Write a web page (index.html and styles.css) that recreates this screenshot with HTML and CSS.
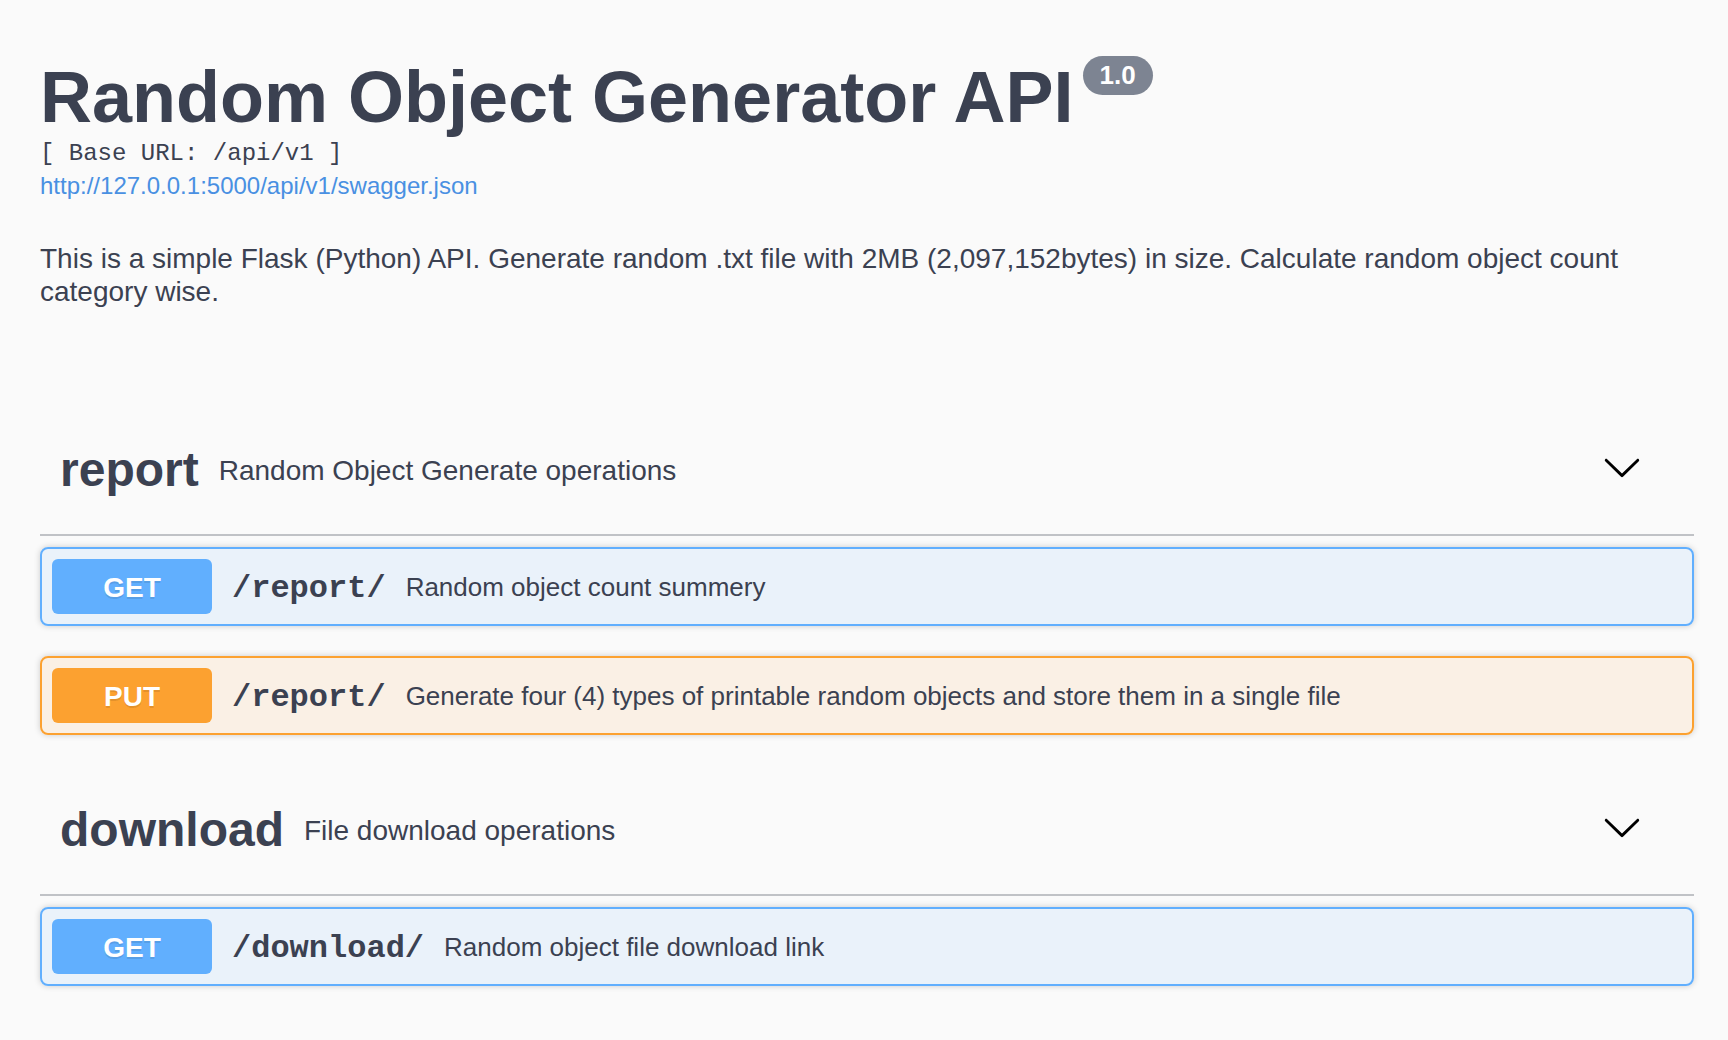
FILE: index.html
```html
<!DOCTYPE html>
<html lang="en">
<head>
<meta charset="utf-8">
<title>Random Object Generator API</title>
<link rel="stylesheet" href="styles.css">
</head>
<body>
<div class="swagger">
  <section class="info">
    <hgroup class="main">
      <h2 class="title"><span class="title-text">Random Object Generator API</span><small class="version"><pre>1.0</pre></small></h2>
      <pre class="base-url">[ Base URL: /api/v1 ]</pre>
      <a class="spec-link" href="#">http://127.0.0.1:5000/api/v1/swagger.json</a>
    </hgroup>
    <div class="description">
      <p>This is a simple Flask (Python) API. Generate random .txt file with 2MB (2,097,152bytes) in size. Calculate random object count category wise.</p>
    </div>
  </section>

  <section class="tag-section first">
    <h3 class="opblock-tag">
      <a class="tag-name">report</a>
      <small class="tag-desc">Random Object Generate operations</small>
      <button class="expand" type="button">
        <svg width="40" height="40" viewBox="0 0 20 20"><path d="M17.418 6.109c.272-.268.709-.268.979 0s.271.701 0 .969l-7.908 7.83c-.27.268-.707.268-.979 0l-7.908-7.83c-.27-.268-.27-.701 0-.969.271-.268.709-.268.979 0L10 13.25l7.418-7.141z"/></svg>
      </button>
    </h3>
    <div class="oplist">
      <div class="opblock get">
        <div class="summary">
          <span class="method">GET</span>
          <span class="path">/report/</span>
          <span class="op-desc">Random object count summery</span>
        </div>
      </div>
      <div class="opblock put">
        <div class="summary">
          <span class="method">PUT</span>
          <span class="path">/report/</span>
          <span class="op-desc">Generate four (4) types of printable random objects and store them in a single file</span>
        </div>
      </div>
    </div>
  </section>

  <section class="tag-section">
    <h3 class="opblock-tag">
      <a class="tag-name">download</a>
      <small class="tag-desc">File download operations</small>
      <button class="expand" type="button">
        <svg width="40" height="40" viewBox="0 0 20 20"><path d="M17.418 6.109c.272-.268.709-.268.979 0s.271.701 0 .969l-7.908 7.83c-.27.268-.707.268-.979 0l-7.908-7.83c-.27-.268-.27-.701 0-.969.271-.268.709-.268.979 0L10 13.25l7.418-7.141z"/></svg>
      </button>
    </h3>
    <div class="oplist">
      <div class="opblock get">
        <div class="summary">
          <span class="method">GET</span>
          <span class="path">/download/</span>
          <span class="op-desc">Random object file download link</span>
        </div>
      </div>
    </div>
  </section>
</div>
</body>
</html>
```

FILE: styles.css
```css
* {
  box-sizing: border-box;
}

html,
body {
  margin: 0;
  padding: 0;
  background: #fafafa;
}

body {
  font-family: "Liberation Sans", Arial, Helvetica, sans-serif;
  color: #3b4151;
}

.swagger {
  padding: 0 34px 0 40px;
}

.info {
  padding-top: 56px;
}

.main {
  margin: 0;
}

.title {
  display: flex;
  align-items: flex-start;
  margin: 0;
  font-size: 72px;
  font-weight: 700;
  line-height: 82px;
  color: #3b4151;
}

.version {
  margin-left: 9px;
  height: 39px;
  padding: 0 17px;
  border-radius: 57px;
  background: #7d8492;
  display: flex;
  align-items: center;
}

.version pre {
  margin: 0;
  font-family: "Liberation Sans", Arial, sans-serif;
  font-size: 26px;
  font-weight: 700;
  line-height: 39px;
  color: #ffffff;
}

.base-url {
  margin: 2px 0 0;
  font-family: "Liberation Mono", "Courier New", monospace;
  font-size: 24px;
  line-height: 28px;
  color: #3b4151;
}

.spec-link {
  display: block;
  margin-top: 4px;
  font-size: 24px;
  line-height: 28px;
  color: #4990e2;
  text-decoration: none;
}

.description p {
  margin: 43px 0 0;
  font-size: 28px;
  line-height: 32.5px;
  color: #3b4151;
}

.tag-section.first {
  margin-top: 92px;
}

.opblock-tag {
  display: flex;
  align-items: center;
  height: 136px;
  margin: 0 0 11px;
  padding: 20px 40px 20px 20px;
  border-bottom: 2px solid rgba(59, 65, 81, 0.3);
  font-size: 48px;
  font-weight: 700;
  color: #3b4151;
}

.tag-name {
  padding-top: 6px;
  font-size: 48px;
  line-height: 56px;
  font-weight: 700;
  color: #3b4151;
}

.tag-desc {
  flex: 1;
  padding: 7px 20px 0;
  font-size: 28px;
  line-height: 32px;
  font-weight: 400;
  color: #3b4151;
}

.expand {
  background: none;
  border: none;
  padding: 0 12px;
  margin: 0;
}

.expand svg {
  display: block;
  fill: #000000;
}

.oplist {
  display: flex;
  flex-direction: column;
  gap: 30px;
  margin-bottom: 25px;
}

.opblock {
  border: 2px solid;
  border-radius: 8px;
  box-shadow: 0 0 6px rgba(0, 0, 0, 0.19);
}

.opblock.get {
  border-color: #61affe;
  background: rgba(97, 175, 254, 0.1);
}

.opblock.put {
  border-color: #fca130;
  background: rgba(252, 161, 48, 0.1);
}

.summary {
  display: flex;
  align-items: center;
  padding: 10px;
}

.method {
  min-width: 160px;
  height: 55px;
  padding: 1px 30px 0;
  border-radius: 6px;
  font-size: 28px;
  font-weight: 700;
  line-height: 55px;
  text-align: center;
  color: #ffffff;
  text-shadow: 0 2px 0 rgba(0, 0, 0, 0.1);
}

.get .method {
  background: #61affe;
}

.put .method {
  background: #fca130;
}

.path {
  padding: 4px 20px 0;
  font-family: "Liberation Mono", "Courier New", monospace;
  font-size: 32px;
  font-weight: 700;
  line-height: 40px;
  color: #3b4151;
}

.op-desc {
  flex: 1 1 auto;
  padding-top: 1px;
  font-size: 26px;
  line-height: 30px;
  color: #3b4151;
}
```
